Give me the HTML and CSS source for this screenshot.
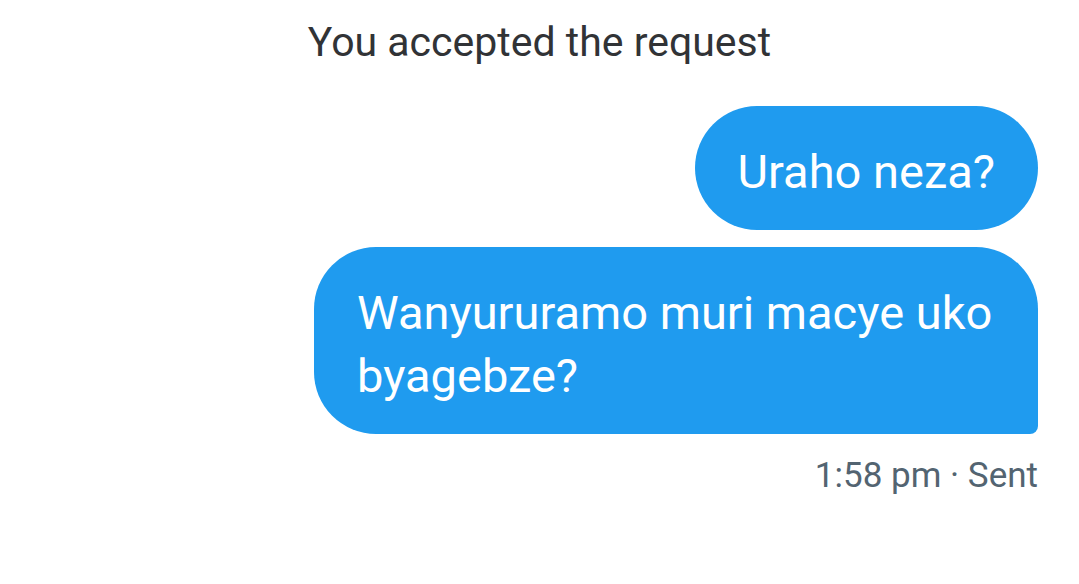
FILE: index.html
```html
<!DOCTYPE html>
<html lang="en">
<head>
    <meta charset="UTF-8">
    <meta name="viewport" content="width=device-width, initial-scale=1.0">
    <title>Conversation</title>
    <link rel="stylesheet" href="styles.css">
</head>
<body>
    <div class="chat">
        <div class="notice">You accepted the request</div>

        <div class="messages">
            <div class="bubble">Uraho neza?</div>
            <div class="bubble last">Wanyururamo muri macye uko byagebze?</div>
            <div class="meta">1:58 pm · Sent</div>
        </div>
    </div>
</body>
</html>
```

FILE: styles.css
```css
body {
    margin: 0;
    background: #ffffff;
    font-family: 'Roboto', 'Noto Sans', sans-serif;
}
.chat {
    padding-top: 18px;
}
.notice {
    text-align: center;
    color: #313336;
    font-size: 41px;
    line-height: 48px;
}
.messages {
    display: flex;
    flex-direction: column;
    align-items: flex-end;
    gap: 17px;
    margin-top: 40px;
    padding-right: 41px;
}
.bubble {
    background: #1f9bef;
    color: #ffffff;
    font-size: 47px;
    line-height: 63px;
    padding: 34px 43px 27px;
    border-radius: 62px;
    max-width: 638px;
}
.bubble.last {
    border-radius: 62px 62px 8px 62px;
}
.meta {
    color: #536471;
    font-size: 35px;
    line-height: 40px;
    margin-top: 5px;
}
```
